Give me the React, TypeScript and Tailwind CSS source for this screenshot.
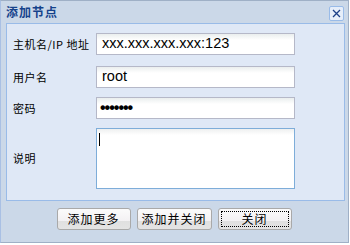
const cjk = "font-['SimSun','Noto_Sans_CJK_SC',sans-serif]";

function Field({ label, children, className = '' }: { label: string; children: React.ReactNode; className?: string }) {
  return (
    <div className={`flex items-center ${className}`}>
      <div className={`w-[89px] shrink-0 whitespace-nowrap pl-[6px] text-[11px] text-black tracking-[0.5px] ${cjk}`}>{label}</div>
      {children}
    </div>
  );
}

function TextBox({ value }: { value: string }) {
  return (
    <div className="w-[199px] h-[22px] border border-[#b5b8c8] bg-[linear-gradient(#eaeeee,#ffffff_6px)] flex items-center pl-[5px] text-[14.5px] text-black font-['Liberation_Sans',Arial,sans-serif]">
      {value}
    </div>
  );
}

function Btn({ label, focused = false, w = 'w-[74px]' }: { label: string; focused?: boolean; w?: string }) {
  return (
    <button className={`${w} h-[22px] rounded-[3px] border border-[#a9a9a9] bg-[linear-gradient(#fbfbfb,#f3f1f3_60%,#e0e0e0_60%,#e4e4e4)] p-[3px] text-[12px] text-black ${cjk}`}>
      <span className={`flex h-full w-full items-center justify-center tracking-[1px] ${focused ? 'outline outline-1 outline-dotted outline-black' : ''}`}>
        {label}
      </span>
    </button>
  );
}

export default function App() {
  return (
    <div className="w-[350px] h-[245px] bg-white">
      <div className="w-[349px] h-[243px] bg-[#cbd8e8] border border-[#9fb0c6] border-l-[#a9c0e4] flex flex-col">
        <div className="h-[22px] flex items-center justify-between pl-[5px] pr-[4px]">
          <span className={`text-[12px] font-bold text-[#15428b] tracking-[1px] ${cjk}`}>添加节点</span>
          <div className="w-[15px] h-[15px] mt-[2px] rounded-[2px] border border-[#99bbe8] bg-[#e6eefa] flex items-center justify-center">
            <svg width="9" height="9" viewBox="0 0 9 9">
              <path d="M1 1L8 8M8 1L1 8" stroke="#1b3f88" strokeWidth="1.3" />
            </svg>
          </div>
        </div>
        <div className="ml-[5px] w-[339px] h-[178px] border border-[#99bbe8] bg-[#dfe8f6] flex flex-col pt-[9px]">
          <Field label="主机名/IP 地址">
            <TextBox value="xxx.xxx.xxx.xxx:123" />
          </Field>
          <Field label="用户名" className="mt-[11px]">
            <TextBox value="root" />
          </Field>
          <Field label="密码" className="mt-[9px]">
            <div className="w-[199px] h-[22px] border border-[#b5b8c8] bg-[linear-gradient(#eaeeee,#ffffff_6px)] flex items-center pl-[3px] text-[16px] font-bold text-black font-['Liberation_Sans',sans-serif] tracking-[-1px]">
              •••••••
            </div>
          </Field>
          <Field label="说明" className="mt-[9px]">
            <div className="w-[199px] h-[61px] border border-[#7eadd9] bg-[linear-gradient(#eef0f0,#ffffff_6px)] pl-[2px] pt-[4px]">
              <div className="w-[1px] h-[13px] bg-black" />
            </div>
          </Field>
        </div>
        <div className="flex justify-center gap-[6px] mt-[7px] pr-[1px]">
          <Btn label="添加更多" />
          <Btn label="添加并关闭" w="w-[75px]" />
          <Btn label="关闭" focused />
        </div>
      </div>
    </div>
  );
}
